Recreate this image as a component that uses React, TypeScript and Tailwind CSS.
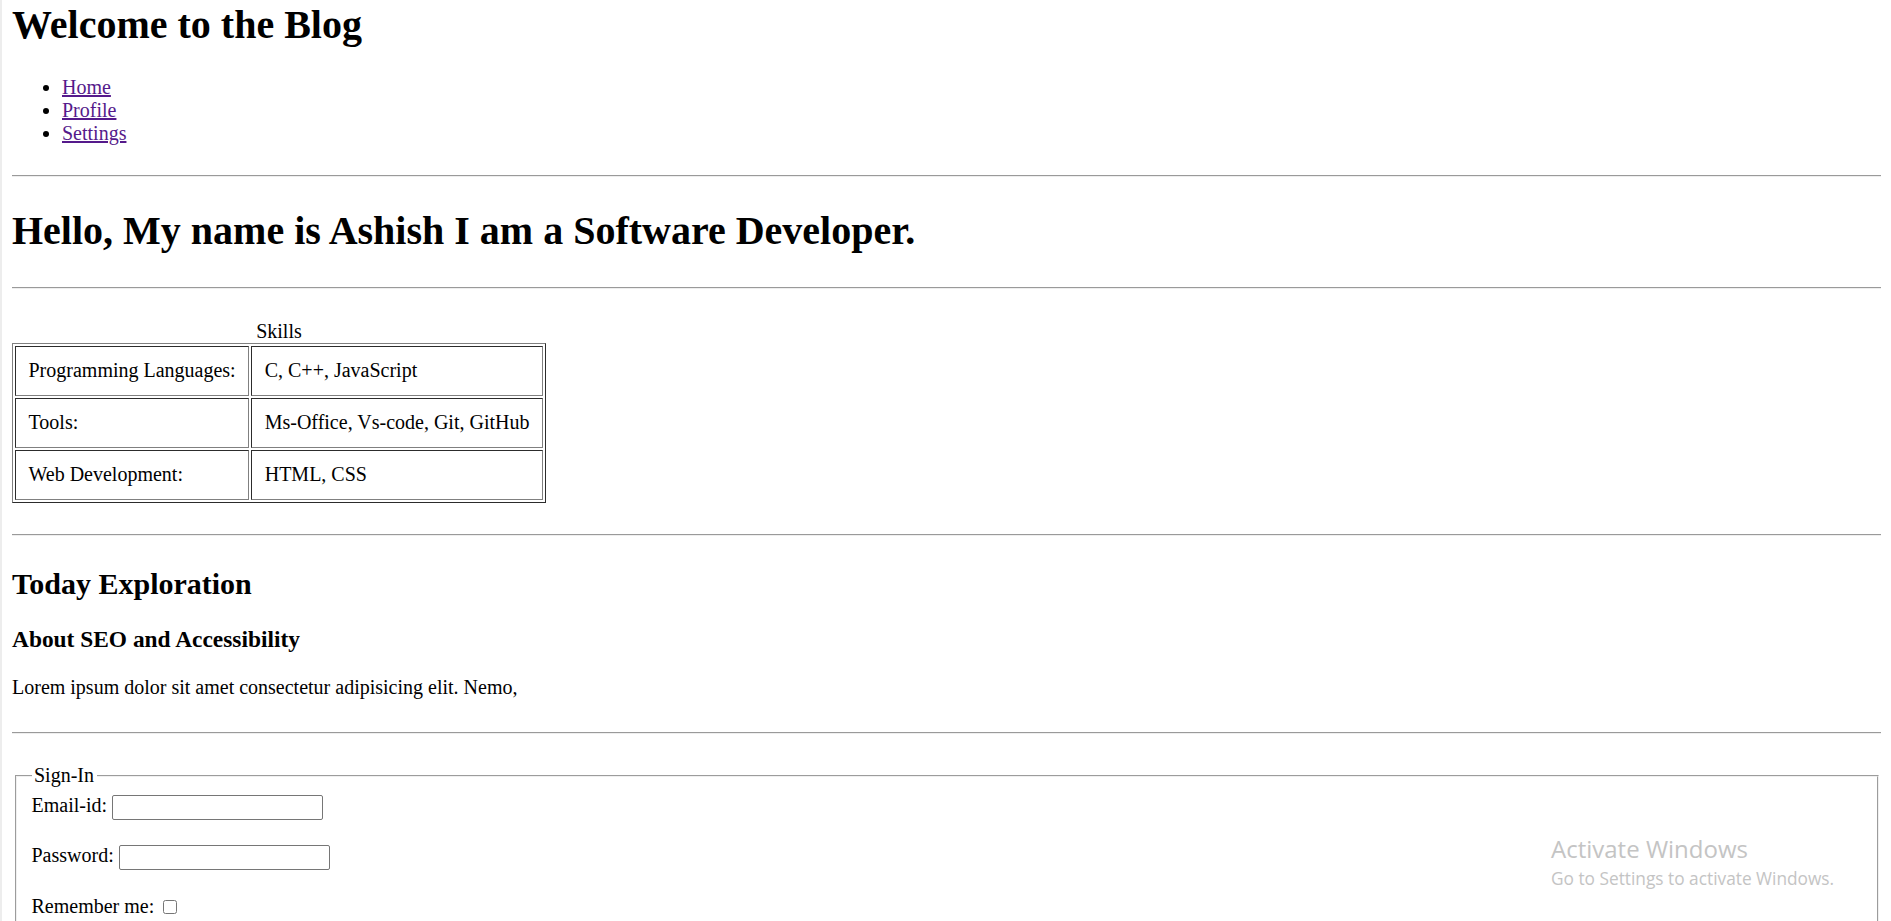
import React from 'react';

const skills = [
  { label: 'Programming Languages:', value: 'C, C++, JavaScript' },
  { label: 'Tools:', value: 'Ms-Office, Vs-code, Git, GitHub' },
  { label: 'Web Development:', value: 'HTML, CSS' },
];

const Rule: React.FC<{ className: string }> = ({ className }) => (
  <hr className={`border-t border-b border-t-[#9a9a9a] border-b-[#eeeeee] ${className}`} />
);

const App: React.FC = () => {
  return (
    <div className="relative h-screen overflow-hidden border-l-2 border-[#ededed] bg-white px-[10px] pt-px font-['Liberation_Serif',serif] text-[20px] leading-[normal] text-black">
      <h1 className="text-[40px] font-bold">Welcome to the Blog</h1>
      <ul className="mt-[28px] list-disc pl-[50px]">
        <li>
          <a href="#" className="text-[#551a8b] underline">Home</a>
        </li>
        <li>
          <a href="#" className="text-[#551a8b] underline">Profile</a>
        </li>
        <li>
          <a href="#" className="text-[#551a8b] underline">Settings</a>
        </li>
      </ul>

      <Rule className="mt-[30px]" />
      <h1 className="mt-[30px] text-[40px] font-bold">Hello, My name is Ashish I am a Software Developer.</h1>
      <Rule className="mt-[33px]" />

      <table className="mt-[30.5px] border-separate border-spacing-[2.5px] border border-t-[#808080] border-l-[#808080] border-r-[#2c2c2c] border-b-[#2c2c2c]">
        <caption className="text-center">Skills</caption>
        <tbody>
          {skills.map((s) => (
            <tr key={s.label}>
              <td className="border border-t-[#2c2c2c] border-l-[#2c2c2c] border-r-[#808080] border-b-[#808080] p-[12.5px] text-left">
                {s.label}
              </td>
              <td className="border border-t-[#2c2c2c] border-l-[#2c2c2c] border-r-[#808080] border-b-[#808080] p-[12.5px] text-left">
                {s.value}
              </td>
            </tr>
          ))}
        </tbody>
      </table>

      <Rule className="mt-[31px]" />
      <h2 className="mt-[31px] text-[30px] font-bold">Today Exploration</h2>
      <h3 className="mt-[25px] text-[23.4px] font-bold">About SEO and Accessibility</h3>
      <p className="mt-[23px]">Lorem ipsum dolor sit amet consectetur adipisicing elit. Nemo,</p>
      <Rule className="mt-[33px]" />

      <fieldset className="mx-[2.5px] mt-[30.5px] border-2 border-[#f0f0f0] px-[15px] pt-[7px] pb-[12.5px] [border-style:groove]">
        <legend className="px-[2.5px]">Sign-In</legend>
        <div className="mt-[1px] flex items-start">
          <label className="-mt-px">Email-id:</label>
          <input type="email" className="ml-[5px] h-[25px] w-[211px] rounded-[2px] border border-[#767676] bg-white" />
        </div>
        <div className="mt-[25px] flex items-start">
          <label className="-mt-[1.5px]">Password:</label>
          <input type="password" className="ml-[5px] h-[25px] w-[211px] rounded-[2px] border border-[#767676] bg-white" />
        </div>
        <div className="mt-[25px] flex items-start">
          <label>Remember me:</label>
          <input type="checkbox" className="ml-[9px] mt-[4.5px] h-[14px] w-[14px] appearance-none rounded-[2.5px] border border-[#767676] bg-white" />
        </div>
      </fieldset>

      <div className="pointer-events-none absolute left-[1549px] top-[835px] font-['Open_Sans',sans-serif] text-[#c4c4c4]">
        <div className="text-[24px] leading-[28px]">Activate Windows</div>
        <div className="mt-[5px] text-[17.3px] leading-[22px]">Go to Settings to activate Windows.</div>
      </div>
    </div>
  );
};

export default App;
